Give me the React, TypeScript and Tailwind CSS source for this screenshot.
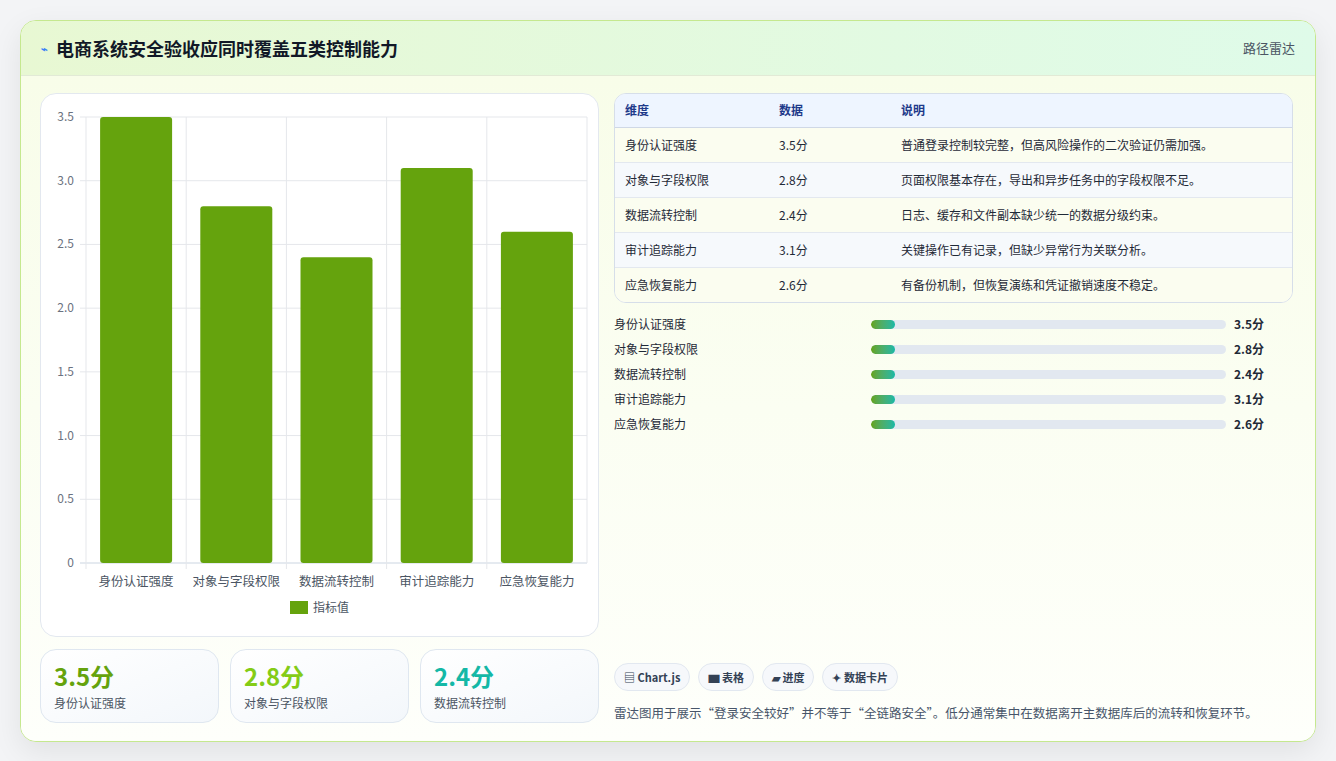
const rows = [
  { name: '身份认证强度', value: 3.5, note: '普通登录控制较完整，但高风险操作的二次验证仍需加强。' },
  { name: '对象与字段权限', value: 2.8, note: '页面权限基本存在，导出和异步任务中的字段权限不足。' },
  { name: '数据流转控制', value: 2.4, note: '日志、缓存和文件副本缺少统一的数据分级约束。' },
  { name: '审计追踪能力', value: 3.1, note: '关键操作已有记录，但缺少异常行为关联分析。' },
  { name: '应急恢复能力', value: 2.6, note: '有备份机制，但恢复演练和凭证撤销速度不稳定。' },
];

const font = { fontFamily: '"Noto Sans CJK SC", "Noto Sans", sans-serif' };

function BarChart() {
  // plot area inside the svg (svg origin = card left/top)
  const left = 45, right = 546, top = 23, bottom = 469;
  const ticks = [0, 0.5, 1, 1.5, 2, 2.5, 3, 3.5];
  const y = (v: number) => bottom - (v / 3.5) * (bottom - top);
  const slot = (right - left) / rows.length;
  return (
    <svg width="558" height="543" className="block">
      {ticks.map((t) => (
        <g key={t}>
          <line x1={left - 6} x2={right} y1={y(t)} y2={y(t)} stroke={t === 0 ? '#cbd5e1' : '#e5e7eb'} />
          <text x={left - 12} y={y(t) + 4} textAnchor="end" fontSize="12" fill="#6b7280">{t === 0 ? '0' : t.toFixed(1)}</text>
        </g>
      ))}
      {rows.map((_, i) => (
        <line key={i} x1={left + slot * i} x2={left + slot * i} y1={top} y2={bottom + 6} stroke="#e5e7eb" />
      ))}
      <line x1={right} x2={right} y1={top} y2={bottom} stroke="#e5e7eb" />
      {rows.map((r, i) => {
        const cx = left + slot * i + slot / 2;
        return (
          <g key={r.name}>
            <rect x={cx - 36} y={y(r.value)} width="72" height={bottom - y(r.value)} rx="3" fill="#65a30d" />
            <text x={cx} y={492} textAnchor="middle" fontSize="12.5" fill="#4b5563">{r.name}</text>
          </g>
        );
      })}
      <rect x="249" y="507" width="18" height="13" fill="#65a30d" />
      <text x="272" y="518" fontSize="12" fill="#4b5563">指标值</text>
    </svg>
  );
}

export default function App() {
  return (
    <div className="min-h-screen bg-[#f3f4f6] pt-5 px-5" style={font}>
      <div className="rounded-2xl border border-[#c5e88f] bg-[#fdfef8] shadow-[0_10px_30px_rgba(0,0,0,0.08)] overflow-hidden">
        <header className="h-[55px] flex items-center justify-between px-5 bg-gradient-to-r from-[#e8f8d3] to-[#dffbe9] border-b border-[#e2ead6]">
          <h1 className="flex items-center gap-2 text-[18px] font-bold text-[#111827]">
            <span className="text-[11px] text-[#3b82f6]">⌁</span>电商系统安全验收应同时覆盖五类控制能力
          </h1>
          <span className="text-[13px] text-[#4b5563]">路径雷达</span>
        </header>

        <div className="flex gap-[15px] px-[19px] pt-[17px] pb-[18px] bg-gradient-to-b from-[#f8fde9] to-[#fefffb]">
          <div className="w-[559px] flex flex-col gap-3">
            <div className="h-[544px] rounded-2xl border border-[#e3e8ef] bg-white">
              <BarChart />
            </div>
            <div className="flex gap-[11px]">
              {[
                { v: '3.5分', c: 'text-[#65a30d]', l: '身份认证强度' },
                { v: '2.8分', c: 'text-[#84cc16]', l: '对象与字段权限' },
                { v: '2.4分', c: 'text-[#14b8a6]', l: '数据流转控制' },
              ].map((s) => (
                <div key={s.l} className="flex-1 h-[74px] rounded-2xl border border-[#dfe7f0] bg-gradient-to-br from-white to-[#f3f7fb] px-[13px] pt-[10px]">
                  <div className={`text-[24px] font-bold leading-8 ${s.c}`}>{s.v}</div>
                  <div className="text-[12px] text-[#4b5563] mt-[2px]">{s.l}</div>
                </div>
              ))}
            </div>
          </div>

          <div className="flex-1 flex flex-col pr-[3px]">
            <div className="rounded-xl border border-[#d6dee9] overflow-hidden bg-white">
              <table className="w-full text-[12px] text-[#1f2937]">
                <thead>
                  <tr className="bg-[#eef5ff] text-[#1e3a8a] font-bold h-[33px] border-b border-[#cfd8e6]">
                    <th className="text-left font-bold pl-[10px] w-[164px]">维度</th>
                    <th className="text-left font-bold w-[122px]">数据</th>
                    <th className="text-left font-bold">说明</th>
                  </tr>
                </thead>
                <tbody>
                  {rows.map((r, i) => (
                    <tr key={r.name} className={`h-[35px] border-b last:border-b-0 border-[#e3e8ef] ${i % 2 ? 'bg-[#f6f9fc]' : 'bg-[#fbfdf0]'}`}>
                      <td className="pl-[10px]">{r.name}</td>
                      <td>{r.value}分</td>
                      <td>{r.note}</td>
                    </tr>
                  ))}
                </tbody>
              </table>
            </div>

            <div className="mt-[12px] flex flex-col gap-[7px]">
              {rows.map((r) => (
                <div key={r.name} className="flex items-center h-[18px] text-[12px]">
                  <span className="w-[257px] text-[#1f2937]">{r.name}</span>
                  <div className="w-[355px] h-[9px] rounded-full bg-[#e2e8f0] overflow-hidden">
                    <div className="w-[24px] h-full rounded-full bg-gradient-to-r from-[#65a30d] to-[#14b8a6]" />
                  </div>
                  <span className="ml-2 font-bold text-[#1f2937]">{r.value}分</span>
                </div>
              ))}
            </div>

            <div className="mt-auto">
              <div className="flex gap-2 text-[11px] font-bold text-[#334155]">
                <span className="h-[28px] px-[9px] flex items-center rounded-full border border-[#e2e8f0] bg-[#f6f8fb]">▤ Chart.js</span>
                <span className="h-[28px] px-[9px] flex items-center rounded-full border border-[#e2e8f0] bg-[#f6f8fb]">▆ 表格</span>
                <span className="h-[28px] px-[9px] flex items-center rounded-full border border-[#e2e8f0] bg-[#f6f8fb]">▰ 进度</span>
                <span className="h-[28px] px-[9px] flex items-center rounded-full border border-[#e2e8f0] bg-[#f6f8fb]">✦ 数据卡片</span>
              </div>
              <p className="mt-[12px] text-[12.5px] text-[#475569] leading-5">雷达图用于展示“登录安全较好”并不等于“全链路安全”。低分通常集中在数据离开主数据库后的流转和恢复环节。</p>
            </div>
          </div>
        </div>
      </div>
    </div>
  );
}
